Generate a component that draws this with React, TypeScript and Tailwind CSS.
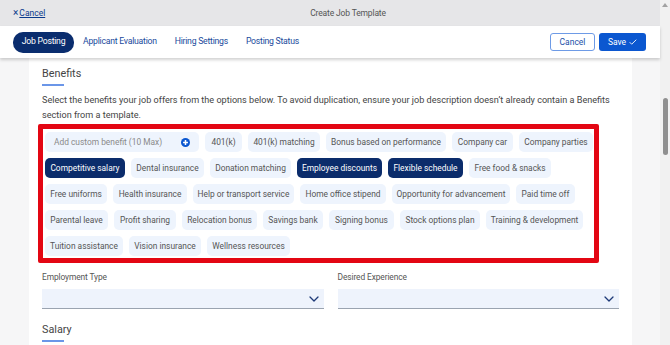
import React from "react";

type Chip = { label: string; w: number; selected?: boolean };

// rows of benefit chips, widths taken from the layout
const rows: Chip[][] = [
  [
    { label: "401(k)", w: 37 },
    { label: "401(k) matching", w: 72 },
    { label: "Bonus based on performance", w: 120 },
    { label: "Company car", w: 61 },
    { label: "Company parties", w: 74 },
  ],
  [
    { label: "Competitive salary", w: 80, selected: true },
    { label: "Dental insurance", w: 73 },
    { label: "Donation matching", w: 81 },
    { label: "Employee discounts", w: 85, selected: true },
    { label: "Flexible schedule", w: 75, selected: true },
    { label: "Free food & snacks", w: 82 },
  ],
  [
    { label: "Free uniforms", w: 62 },
    { label: "Health insurance", w: 74 },
    { label: "Help or transport service", w: 101 },
    { label: "Home office stipend", w: 86 },
    { label: "Opportunity for advancement", w: 118 },
    { label: "Paid time off", w: 59 },
  ],
  [
    { label: "Parental leave", w: 63 },
    { label: "Profit sharing", w: 62 },
    { label: "Relocation bonus", w: 75 },
    { label: "Savings bank", w: 60 },
    { label: "Signing bonus", w: 65 },
    { label: "Stock options plan", w: 80 },
    { label: "Training & development", w: 97 },
  ],
  [
    { label: "Tuition assistance", w: 78 },
    { label: "Vision insurance", w: 72 },
    { label: "Wellness resources", w: 83 },
  ],
];

const tabs = ["Applicant Evaluation", "Hiring Settings", "Posting Status"];

const Chevron = () => (
  <svg width="10" height="6" viewBox="0 0 10 6" fill="none">
    <path d="M1 1l4 4 4-4" stroke="#1e3a78" strokeWidth="1.3" strokeLinecap="round" strokeLinejoin="round" />
  </svg>
);

const SelectField = ({ label }: { label: string }) => (
  <div className="flex flex-col">
    <span className="text-[8.4px] tracking-[-0.1px] text-[#555] leading-[12px] h-[12px]">{label}</span>
    <div className="mt-[6px] h-[20px] bg-[#eef3fc] border-b border-[#9aa3b0] flex items-center justify-end pr-[5px]">
      <Chevron />
    </div>
  </div>
);

const SectionTitle = ({ text }: { text: string }) => (
  <div>
    <h2 className="text-[10.8px] text-[#444] leading-[14px]">{text}</h2>
    <div className="mt-[3px] w-[22px] h-[2px] bg-[#6b96e8]" />
  </div>
);

const BenefitChip = ({ chip }: { chip: Chip }) => (
  <div
    style={{ width: chip.w }}
    className={
      chip.selected
        ? "h-[20px] shrink-0 rounded-[5px] flex items-center justify-center whitespace-nowrap text-[8.4px] bg-[#0b2c6b] text-white"
        : "h-[20px] shrink-0 rounded-[5px] flex items-center justify-center whitespace-nowrap text-[8.4px] bg-[#eef4fd] text-[#555]"
    }
  >
    {chip.label}
  </div>
);

export default function App() {
  return (
    <div className="w-[670px] h-[345px] overflow-hidden flex bg-[#f6f6f7]" style={{ fontFamily: "Roboto, 'Liberation Sans', sans-serif" }}>
      <div className="w-[660px] flex flex-col">
        {/* top bar */}
        <div className="h-[26px] shrink-0 bg-[#e6e6e8] flex items-center">
          <a className="ml-[13px] text-[#0a3a8c] flex items-center text-[8.5px]">
            <span className="text-[10px] leading-none mr-[1px]">×</span>
            <span className="underline">Cancel</span>
          </a>
          <span className="ml-[265px] text-[#555] text-[8.5px] tracking-[-0.15px]">Create Job Template</span>
        </div>
        {/* tab bar */}
        <div className="h-[32px] shrink-0 bg-white flex items-center px-[13px] shadow-[0_2px_3px_rgba(0,0,0,0.18)] relative z-10">
          <div className="h-[21px] w-[61px] rounded-[10px] bg-[#0a2d6e] text-white text-[8.7px] tracking-[-0.25px] flex items-center justify-center">Job Posting</div>
          <div className="flex items-center gap-[18px] ml-[9px] text-[8.7px] tracking-[-0.25px] text-[#1a4a9c]">
            {tabs.map((t) => (
              <span key={t}>{t}</span>
            ))}
          </div>
          <div className="ml-auto flex items-center gap-[4px] mr-[1px]">
            <button className="h-[18px] w-[45px] border border-[#6e9be6] rounded-[3px] text-[8.5px] text-[#1a4fa8] bg-white">Cancel</button>
            <button className="h-[18px] w-[47px] rounded-[3px] bg-[#0b57d0] text-white text-[8.5px] flex items-center justify-center gap-[3px]">
              Save
              <svg width="8" height="6" viewBox="0 0 8 6" fill="none">
                <path d="M0.7 3.2l2 2L7.3 0.7" stroke="white" strokeWidth="0.9" />
              </svg>
            </button>
          </div>
        </div>
        {/* content */}
        <div className="flex-1 flex min-h-0">
          <div className="ml-[29px] w-[603px] bg-white px-[13px] pt-[9px]">
            <SectionTitle text="Benefits" />
            <p className="mt-[7px] text-[9.1px] leading-[15px] text-[#444]">
              Select the benefits your job offers from the options below. To avoid duplication, ensure your job description doesn’t already contain a Benefits section from a template.
            </p>
            <div className="mt-[1px] -ml-[4px] w-[561px] border-[5px] border-[#e30613] rounded-[2px] pt-[3px] pb-[2px] pl-[2px] flex flex-col gap-[6px]">
              <div className="flex gap-[6px]">
                <div className="w-[154px] h-[20px] shrink-0 rounded-[5px] bg-[#eef4fd] flex items-center justify-between pl-[9px] pr-[9px]">
                  <span className="text-[8.4px] text-[#8a8a8a] whitespace-nowrap">Add custom benefit (10 Max)</span>
                  <svg width="9" height="9" viewBox="0 0 10 10">
                    <circle cx="5" cy="5" r="5" fill="#0b57d0" />
                    <path d="M5 2.3v5.4M2.3 5h5.4" stroke="#ffffff" strokeWidth="1.7" />
                  </svg>
                </div>
                {rows[0].map((c) => (
                  <BenefitChip key={c.label} chip={c} />
                ))}
              </div>
              {rows.slice(1).map((row, i) => (
                <div key={i} className="flex gap-[6px]">
                  {row.map((c) => (
                    <BenefitChip key={c.label} chip={c} />
                  ))}
                </div>
              ))}
            </div>
            <div className="mt-[8px] grid grid-cols-2 gap-x-[14px]">
              <SelectField label="Employment Type" />
              <SelectField label="Desired Experience" />
            </div>
            <div className="mt-[14px]">
              <SectionTitle text="Salary" />
            </div>
          </div>
        </div>
      </div>
      {/* scrollbar */}
      <div className="w-[10px] bg-[#f1f1f1] flex flex-col items-center">
        <svg width="6" height="4" viewBox="0 0 6 4" className="mt-[3px]">
          <path d="M0 4L3 0l3 4z" fill="#a3a3a3" />
        </svg>
        <div className="mt-[91px] w-[5px] h-[57px] rounded-[3px] bg-[#8f8f8f]" />
      </div>
    </div>
  );
}
